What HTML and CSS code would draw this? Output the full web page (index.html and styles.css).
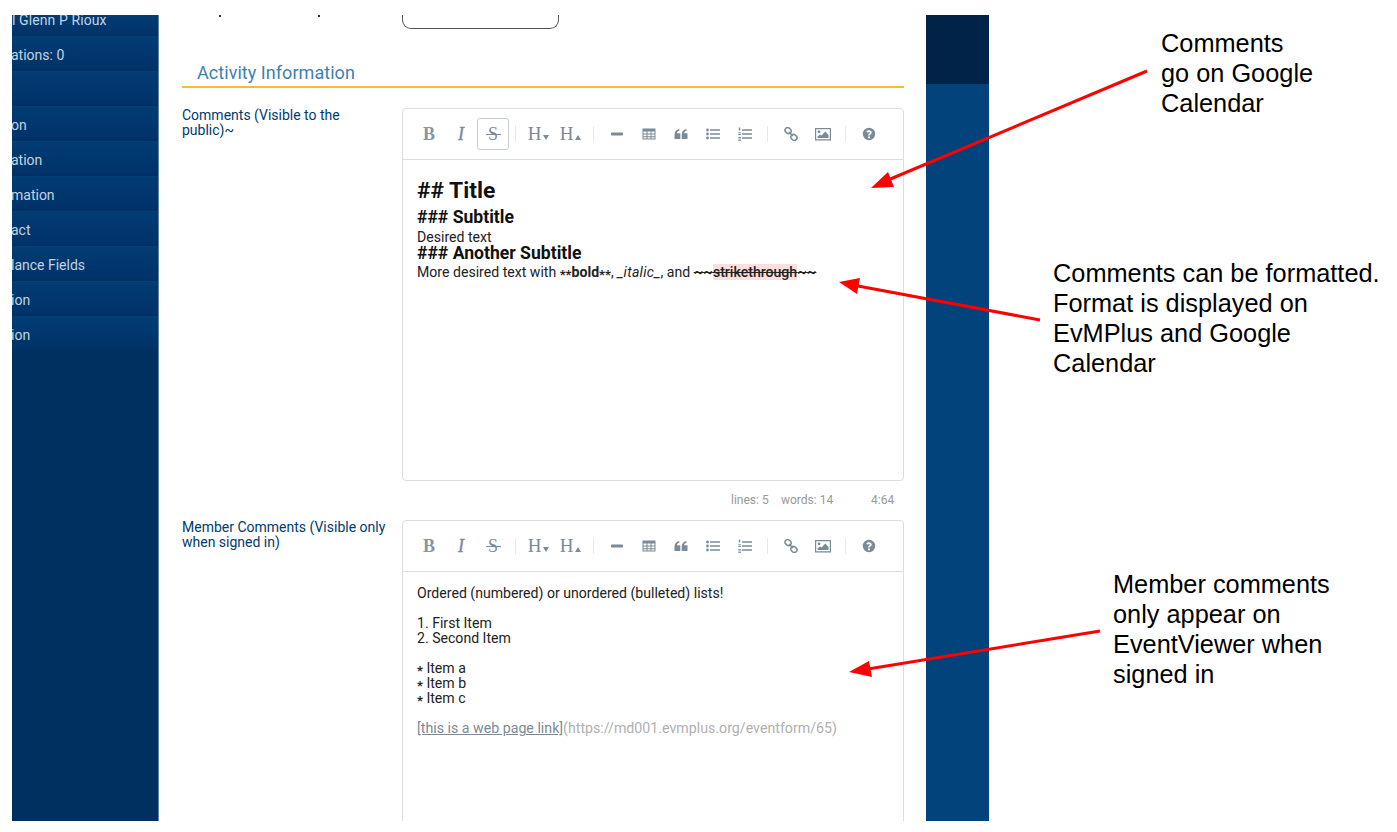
FILE: index.html
```html
<!DOCTYPE html>
<html lang="en">
<head>
  <meta charset="UTF-8">
  <meta name="viewport" content="width=device-width, initial-scale=1.0">
  <title>Event form comments</title>
  <link rel="stylesheet" href="styles.css">
</head>
<body>
  <svg width="0" height="0" class="defs">
    <symbol id="i-minus" viewBox="0 0 14 14"><rect x="1" y="5.500" width="12" height="3" rx="0.8"/></symbol>
    <symbol id="i-table" viewBox="0 0 14 14"><path fill-rule="evenodd" d="M.5 1.500h13v11H.5zM1.500 4.500v2h3v-2zM5.500 4.500v2h3v-2zM9.500 4.500v2h3v-2zM1.500 7.500v1.800h3V7.500zM5.500 7.500v1.800h3V7.500zM9.500 7.500v1.800h3V7.500zM1.500 10.200v1.400h3v-1.400zM5.500 10.200v1.400h3v-1.400zM9.500 10.200v1.400h3v-1.400z"/></symbol>
    <symbol id="i-quote" viewBox="0 0 14 14"><path d="M.5 8c0-3.200 1.600-5.400 4.800-6v1.700C3.800 4 3 5 2.900 6.200h3.400V12H.5zM7.700 8c0-3.200 1.600-5.400 4.800-6v1.700C11 4 10.200 5 10.100 6.200h3.400V12H7.700z"/></symbol>
    <symbol id="i-ul" viewBox="0 0 14 14"><circle cx="1.500" cy="3" r="1.400"/><circle cx="1.500" cy="7" r="1.400"/><circle cx="1.500" cy="11" r="1.400"/><rect x="4" y="2.200" width="10" height="1.600" rx="0.4"/><rect x="4" y="6.200" width="10" height="1.600" rx="0.4"/><rect x="4" y="10.200" width="10" height="1.600" rx="0.4"/></symbol>
    <symbol id="i-ol" viewBox="0 0 14 14"><rect x="0.800" y="0.500" width="1.400" height="3"/><rect x="0.300" y="5.300" width="2.600" height="1"/><rect x="0.300" y="7" width="2.600" height="1"/><rect x="0.300" y="10" width="2.600" height="0.900"/><rect x="0.300" y="11.500" width="2.600" height="0.900"/><rect x="0.300" y="13" width="2.600" height="0.900"/><rect x="4" y="2.200" width="10" height="1.600" rx="0.4"/><rect x="4" y="6.200" width="10" height="1.600" rx="0.4"/><rect x="4" y="10.200" width="10" height="1.600" rx="0.4"/></symbol>
    <symbol id="i-link" viewBox="0 0 14 14"><g fill="none" stroke="currentColor" stroke-width="1.500"><rect x="0.900" y="0.900" width="6.400" height="5.200" rx="2.600" transform="rotate(42 4 3.500)"/><rect x="6.700" y="7.900" width="6.400" height="5.200" rx="2.600" transform="rotate(42 10 10.500)"/><path d="M5 5l4 4"/></g></symbol>
    <symbol id="i-image" viewBox="0 0 16 14"><path fill-rule="evenodd" d="M0 1h16v12.500H0zM1.200 2.200v10.100h13.600V2.200z"/><circle cx="4" cy="4.800" r="1.400"/><path d="M2.500 11v-1.600l2.500-2 1.500 1.200 3.800-4 3.200 3.400V11z"/></symbol>
    <symbol id="i-help" viewBox="0 0 14 14"><path fill-rule="evenodd" d="M7 .8a6.200 6.200 0 1 0 0 12.400A6.200 6.200 0 0 0 7 .8zM8 11.200H6V9.400h2zM9.700 5.600c0 1-.6 1.500-1.200 1.900-.4.300-.6.500-.6 1H6.100c0-1 .5-1.500 1.100-1.900.4-.3.700-.5.700-.9 0-.4-.4-.7-.9-.7-.6 0-1 .3-1.300.8L4.400 4.700C5 3.800 5.900 3.300 7.100 3.300c1.500 0 2.600.9 2.600 2.300z"/></symbol>
  </svg>

  <div class="frame">
    <nav class="sidebar">
      <a class="side-row side-first">l Glenn P Rioux</a>
      <a class="side-row">ations: 0</a>
      <a class="side-row"></a>
      <a class="side-row">on</a>
      <a class="side-row">ation</a>
      <a class="side-row">mation</a>
      <a class="side-row">act</a>
      <a class="side-row">lance Fields</a>
      <a class="side-row">ion</a>
      <a class="side-row">ion</a>
    </nav>

    <main class="content">
      <div class="top-field">
        <div class="top-label"><i class="tick tick-a"></i><i class="tick tick-b"></i></div>
        <div class="top-input"></div>
      </div>

      <h2 class="section-title">Activity Information</h2>

      <div class="form-row">
        <label class="form-label">Comments (Visible to the public)~</label>
        <div class="form-field">
          <div class="editor editor-first">
            <div class="toolbar">
              <button class="tool tool-b">B</button>
              <button class="tool tool-i">I</button>
              <button class="tool tool-s active">S</button>
              <i class="sep"></i>
              <button class="tool tool-h">H<i class="caret caret-down"></i></button>
              <button class="tool tool-h">H<i class="caret caret-up"></i></button>
              <i class="sep"></i>
              <button class="tool"><svg class="ico"><use href="#i-minus"/></svg></button>
              <button class="tool"><svg class="ico"><use href="#i-table"/></svg></button>
              <button class="tool"><svg class="ico"><use href="#i-quote"/></svg></button>
              <button class="tool"><svg class="ico"><use href="#i-ul"/></svg></button>
              <button class="tool"><svg class="ico"><use href="#i-ol"/></svg></button>
              <i class="sep"></i>
              <button class="tool"><svg class="ico"><use href="#i-link"/></svg></button>
              <button class="tool"><svg class="ico ico-wide"><use href="#i-image"/></svg></button>
              <i class="sep"></i>
              <button class="tool"><svg class="ico"><use href="#i-help"/></svg></button>
            </div>
            <div class="editor-body">
              <div class="md-h2">## Title</div>
              <div class="md-h3">### Subtitle</div>
              <div>Desired text</div>
              <div class="md-h3 md-h3-tight">### Another Subtitle</div>
              <div>More desired text with <b class="md-bold"><span class="md-star">**</span>bold<span class="md-star">**</span></b>, <em class="md-em">_italic_</em>, and <span class="md-strike">~~<span class="md-strike-word">strikethrough</span>~~</span></div>
            </div>
          </div>
          <div class="statusbar"><span class="st-lines">lines: 5</span><span class="st-words">words: 14</span><span class="st-pos">4:64</span></div>
        </div>
      </div>

      <div class="form-row">
        <label class="form-label">Member Comments (Visible only when signed in)</label>
        <div class="form-field">
          <div class="editor editor-second">
            <div class="toolbar">
              <button class="tool tool-b">B</button>
              <button class="tool tool-i">I</button>
              <button class="tool tool-s">S</button>
              <i class="sep"></i>
              <button class="tool tool-h">H<i class="caret caret-down"></i></button>
              <button class="tool tool-h">H<i class="caret caret-up"></i></button>
              <i class="sep"></i>
              <button class="tool"><svg class="ico"><use href="#i-minus"/></svg></button>
              <button class="tool"><svg class="ico"><use href="#i-table"/></svg></button>
              <button class="tool"><svg class="ico"><use href="#i-quote"/></svg></button>
              <button class="tool"><svg class="ico"><use href="#i-ul"/></svg></button>
              <button class="tool"><svg class="ico"><use href="#i-ol"/></svg></button>
              <i class="sep"></i>
              <button class="tool"><svg class="ico"><use href="#i-link"/></svg></button>
              <button class="tool"><svg class="ico ico-wide"><use href="#i-image"/></svg></button>
              <i class="sep"></i>
              <button class="tool"><svg class="ico"><use href="#i-help"/></svg></button>
            </div>
            <div class="editor-body">
              <div>Ordered (numbered) or unordered (bulleted) lists!</div>
              <div class="blank"></div>
              <div>1. First Item</div>
              <div>2. Second Item</div>
              <div class="blank"></div>
              <div><b class="md-star">*</b> Item a</div>
              <div><b class="md-star">*</b> Item b</div>
              <div><b class="md-star">*</b> Item c</div>
              <div class="blank"></div>
              <div class="md-linkline"><span class="md-link">[this is a web page link]</span><span class="md-url">(https://md001.evmplus.org/eventform/65)</span></div>
            </div>
          </div>
        </div>
      </div>
    </main>

    <aside class="rightbar"><div class="rightbar-top"></div></aside>
  </div>

  <!-- annotations drawn on top of the screenshot -->
  <svg class="arrows" width="1397" height="832" viewBox="0 0 1397 832">
    <path d="M1147 71L888 180"/>
    <polygon points="871,188 888,172 894,187"/>
    <path d="M1040 320L858 286"/>
    <polygon points="839,282 860,278 857,294"/>
    <path d="M1100 631L868 669"/>
    <polygon points="849,672 869,661 872,677"/>
  </svg>
  <p class="note note-a">Comments<br>go on Google<br>Calendar</p>
  <p class="note note-b">Comments can be formatted.<br>Format is displayed on<br>EvMPlus and Google<br>Calendar</p>
  <p class="note note-c">Member comments<br>only appear on<br>EventViewer when<br>signed in</p>
</body>
</html>
```

FILE: styles.css
```css
html, body {margin: 0; height: 100%; overflow: hidden; background: #fff;}
body {font-family: Roboto, "Liberation Sans", sans-serif; font-size: 14px; line-height: 15px; color: #222;}
.defs {position: absolute;}

.frame {display: flex; width: 977px; height: 806px; margin: 15px 0 0 12px; overflow: hidden;}

/* left menu */
.sidebar {width: 146px; flex: none; background: #00305f; border-right: 1px solid #5f84a6; overflow: hidden;}
.side-row {display: block; box-sizing: border-box; height: 35px; line-height: 37px; margin-left: -1px; color: #c3d3e2; white-space: nowrap; overflow: hidden; background: linear-gradient(#013c72, #00336a 90%, #002f60); border-top: 1px solid #01417a;}
.side-first {height: 21px; line-height: 11px; margin-left: 0; letter-spacing: .1px; border-top: 0;}

/* main form */
.content {width: 767px; flex: none; box-sizing: border-box; padding: 0 22px 0 23px; background: #fff;}
.top-field {display: flex; height: 14px;}
.top-label {width: 220px; flex: none; display: flex; align-items: flex-start;}
.tick {display: block; width: 2px; height: 2px; background: #0b3c66;}
.tick-a {margin-left: 37px;}
.tick-b {margin-left: 97px;}
.top-input {width: 155px; height: 13px; border: 1px solid #555; border-top: 0; border-radius: 0 0 9px 9px;}

.section-title {margin: 33px 0 0; padding: 0 0 3px 15px; font-size: 18px; line-height: 21px; font-weight: 400; letter-spacing: .05px; color: #3d7fb6; border-bottom: 2px solid #fdb83b;}

.form-row {display: flex; margin-top: 20px;}
.form-row + .form-row {margin-top: 0;}
.form-label {width: 220px; flex: none; box-sizing: border-box; padding-right: 10px; color: #003b6c;}
.form-field {width: 502px; flex: none;}

/* markdown editor */
.editor {box-sizing: border-box; border: 1px solid #ddd; border-radius: 4px; background: #fff;}
.editor-first {height: 373px;}
.editor-second {height: 400px;}
.toolbar {display: flex; align-items: center; height: 50px; padding-left: 10px; border-bottom: 1px solid #ddd;}
.tool {display: flex; align-items: center; justify-content: center; position: relative; box-sizing: border-box; width: 32px; height: 32px; padding: 0; background: none; border: 1px solid transparent; border-radius: 3px; color: #7b8a97; font-family: "Liberation Serif", serif; font-size: 18px;}
.tool.active {border-color: #c4ccd1;}
.tool-b {font-weight: 700; color: #8795a1;}
.tool-i {font-style: italic; -webkit-text-stroke: .35px #7b8a97;}
.tool-s::after {content: ""; position: absolute; left: 8px; top: 15px; width: 15px; height: 1px; background: #7b8a97;}
.tool-h {font-size: 19px; padding-right: 1px;}
.caret {display: block; width: 0; height: 0; margin: 7px 0 0 2px; border-left: 3px solid transparent; border-right: 3px solid transparent;}
.caret-down {border-top: 5px solid #7b8a97;}
.caret-up {border-bottom: 5px solid #7b8a97;}
.sep {display: block; width: 1px; height: 16px; margin: 0 7px 0 6px; background: #e6e9eb;}
.ico {display: block; width: 14px; height: 14px; fill: currentColor;}
.ico-wide {width: 16px;}

.editor-body {padding: 14px 14px; font-size: 14.1px; color: #222;}
.md-h2 {font-size: 22.8px; line-height: 33px; margin-bottom: -1px; font-weight: 700; color: #111;}
.md-h3 {font-size: 17.6px; line-height: 22px; margin-bottom: 2px; font-weight: 700; color: #111;}
.md-h3-tight {line-height: 16px; margin: 0 0 4px;}
.md-bold {font-weight: 700;}
.md-em {letter-spacing: .25px;}
.md-strike {text-decoration: line-through;}
.md-strike-word {background: #fddede; font-weight: 500;}
.md-star {font-size: 13px; font-weight: 700; vertical-align: -2px; line-height: 0;}
.md-linkline {font-size: 14.2px;}
.md-link {color: #7b8a97; text-decoration: underline;}
.md-url {color: #b0b0b0;}
.blank {height: 15px;}

.statusbar {display: flex; height: 39px; align-items: center; color: #999; font-size: 12px;}
.st-lines {margin-left: 329px; width: 50px;}
.st-words {width: 90px;}

/* right band */
.rightbar {width: 63px; flex: none; background: #01437a;}
.rightbar-top {height: 69px; background: #002347;}

/* annotations */
.arrows {position: absolute; left: 0; top: 0;}
.arrows path {fill: none; stroke: #f00; stroke-width: 3;}
.arrows polygon {fill: #f00;}
.note {position: absolute; margin: 0; font-family: "Liberation Sans", Arial, sans-serif; font-size: 25.33px; line-height: 30px; color: #000; white-space: nowrap;}
.note-a {left: 1161px; top: 28px;}
.note-b {left: 1053px; top: 258px;}
.note-c {left: 1113px; top: 569px;}
```
